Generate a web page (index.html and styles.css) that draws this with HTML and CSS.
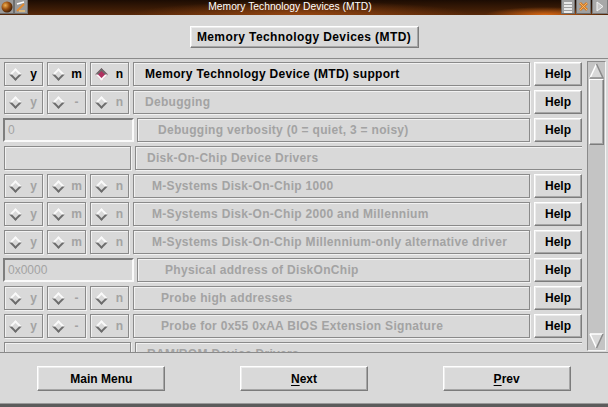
FILE: index.html
```html
<!DOCTYPE html>
<html>
<head>
    <title>Memory Technology Devices (MTD)</title>
    <link rel="stylesheet" href="styles.css">
</head>
<body>
    <div class="window">
        <!-- Title bar -->
        <div class="titlebar">
            <div class="tb-btn">
                <svg width="14" height="15" viewBox="0 0 14 15">
                    <defs>
                        <radialGradient id="ball" cx="0.35" cy="0.35" r="0.7">
                            <stop offset="0" stop-color="#f0b050"/>
                            <stop offset="0.5" stop-color="#9a5010"/>
                            <stop offset="1" stop-color="#3a1a04"/>
                        </radialGradient>
                    </defs>
                    <rect x="0" y="0" width="14" height="14" fill="#6e6e6e"/>
                    <rect x="0" y="0" width="13" height="13" fill="#9a9a9a"/>
                    <circle cx="7" cy="7" r="5.5" fill="url(#ball)"/>
                </svg>
            </div>
            <div class="tb-btn">
                <svg width="14" height="15" viewBox="0 0 14 15">
                    <rect x="0" y="0" width="14" height="14" fill="#6e6e6e"/>
                    <rect x="1" y="0" width="12" height="13" fill="#9a9a9a"/>
                    <path d="M3 4 L10 2" stroke="#fff" stroke-width="1.5"/>
                    <path d="M10 4 L3 11" stroke="#e08a30" stroke-width="2"/>
                    <path d="M5 11 L11 11" stroke="#f0c070" stroke-width="1.5"/>
                </svg>
            </div>
            <div class="tb-title">Memory Technology Devices (MTD)</div>
            <div class="tb-btn tb-wide">
                <svg width="16" height="15" viewBox="0 0 16 15">
                    <rect x="1" y="0" width="14" height="14" fill="#6e6e6e"/>
                    <rect x="2" y="0" width="12" height="13" fill="#a0a0a0"/>
                    <path d="M4 3 H12 M4 6 H12 M4 9 H12 M4 12 H12" stroke="#fff" stroke-width="1.3"/>
                </svg>
            </div>
            <div class="tb-btn tb-wide">
                <svg width="16" height="15" viewBox="0 0 16 15">
                    <rect x="0" y="0" width="15" height="14" fill="#6e6e6e"/>
                    <rect x="1" y="0" width="13" height="13" fill="#a0a0a0"/>
                    <path d="M4 3 L11 10 M11 3 L4 10" stroke="#d87a20" stroke-width="2.6"/>
                    <path d="M4 3 L11 10 M11 3 L4 10" stroke="#f6c27a" stroke-width="0.8"/>
                </svg>
            </div>
            <div class="tb-btn tb-wide">
                <svg width="16" height="15" viewBox="0 0 16 15">
                    <rect x="0" y="0" width="16" height="14" fill="#7a7a7a"/>
                    <rect x="1" y="0" width="14" height="13" fill="#a8a8a8"/>
                    <path d="M5 2 L11 6.5 L5 11 Z" fill="#c8c8c8" stroke="#f4f4f4" stroke-width="1"/>
                </svg>
            </div>
        </div>

        <!-- Menu title button -->
        <div class="header">
            <button class="btn title-btn">Memory Technology Devices (MTD)</button>
        </div>

        <!-- Option list -->
        <div class="list-frame">
            <div class="rows">
                <div class="row">
                    <div class="groove tri"><i class="dia"></i><span>y</span></div>
                    <div class="groove tri"><i class="dia"></i><span>m</span></div>
                    <div class="groove tri"><i class="dia on"></i><span>n</span></div>
                    <div class="groove label">Memory Technology Device (MTD) support</div>
                    <button class="btn help">Help</button>
                </div>
                <div class="row off">
                    <div class="groove tri"><i class="dia"></i><span>y</span></div>
                    <div class="groove tri"><i class="dia"></i><span>-</span></div>
                    <div class="groove tri"><i class="dia"></i><span>n</span></div>
                    <div class="groove label">Debugging</div>
                    <button class="btn help">Help</button>
                </div>
                <div class="row off">
                    <div class="entry">0</div>
                    <div class="groove label wide-gap indent-2">Debugging verbosity (0 = quiet, 3 = noisy)</div>
                    <button class="btn help">Help</button>
                </div>
                <div class="row off">
                    <div class="groove blank"></div>
                    <div class="groove label comment">Disk-On-Chip Device Drivers</div>
                </div>
                <div class="row off">
                    <div class="groove tri"><i class="dia"></i><span>y</span></div>
                    <div class="groove tri"><i class="dia"></i><span>m</span></div>
                    <div class="groove tri"><i class="dia"></i><span>n</span></div>
                    <div class="groove label indent-1">M-Systems Disk-On-Chip 1000</div>
                    <button class="btn help">Help</button>
                </div>
                <div class="row off">
                    <div class="groove tri"><i class="dia"></i><span>y</span></div>
                    <div class="groove tri"><i class="dia"></i><span>m</span></div>
                    <div class="groove tri"><i class="dia"></i><span>n</span></div>
                    <div class="groove label indent-1">M-Systems Disk-On-Chip 2000 and Millennium</div>
                    <button class="btn help">Help</button>
                </div>
                <div class="row off">
                    <div class="groove tri"><i class="dia"></i><span>y</span></div>
                    <div class="groove tri"><i class="dia"></i><span>m</span></div>
                    <div class="groove tri"><i class="dia"></i><span>n</span></div>
                    <div class="groove label indent-1">M-Systems Disk-On-Chip Millennium-only alternative driver</div>
                    <button class="btn help">Help</button>
                </div>
                <div class="row off">
                    <div class="entry">0x0000</div>
                    <div class="groove label wide-gap indent-3">Physical address of DiskOnChip</div>
                    <button class="btn help">Help</button>
                </div>
                <div class="row off">
                    <div class="groove tri"><i class="dia"></i><span>y</span></div>
                    <div class="groove tri"><i class="dia"></i><span>-</span></div>
                    <div class="groove tri"><i class="dia"></i><span>n</span></div>
                    <div class="groove label indent-3">Probe high addresses</div>
                    <button class="btn help">Help</button>
                </div>
                <div class="row off">
                    <div class="groove tri"><i class="dia"></i><span>y</span></div>
                    <div class="groove tri"><i class="dia"></i><span>-</span></div>
                    <div class="groove tri"><i class="dia"></i><span>n</span></div>
                    <div class="groove label indent-3">Probe for 0x55 0xAA BIOS Extension Signature</div>
                    <button class="btn help">Help</button>
                </div>
                <div class="row off">
                    <div class="groove blank"></div>
                    <div class="groove label comment">RAM/ROM Device Drivers</div>
                </div>
            </div>

            <!-- Scrollbar -->
            <div class="scrollbar">
                <div class="arrow">
                    <svg width="15" height="16" viewBox="0 0 15 16">
                        <path d="M7.5 1 L14 15 L1 15 Z" fill="#d9d9d9"/>
                        <path d="M1 15 L7.5 1" stroke="#fff" stroke-width="1.5"/>
                        <path d="M7.5 1 L14 15 L1 15" fill="none" stroke="#8a8a8a" stroke-width="1.5"/>
                    </svg>
                </div>
                <div class="thumb"></div>
                <div class="trough"></div>
                <div class="arrow">
                    <svg width="15" height="16" viewBox="0 0 15 16">
                        <path d="M1 1 L14 1 L7.5 15 Z" fill="#d9d9d9"/>
                        <path d="M1 1 L14 1 M1 1 L7.5 15" stroke="#fff" stroke-width="1.5" fill="none"/>
                        <path d="M14 1 L7.5 15" stroke="#8a8a8a" stroke-width="1.5"/>
                    </svg>
                </div>
            </div>
        </div>

        <!-- Navigation -->
        <div class="footer">
            <button class="btn nav">Main Menu</button>
            <button class="btn nav"><u>N</u>ext</button>
            <button class="btn nav"><u>P</u>rev</button>
        </div>
        <div class="bottom-edge"></div>
    </div>
</body>
</html>
```

FILE: styles.css
```css
* {
    box-sizing: border-box;
}

body {
    margin: 0;
    width: 608px;
    height: 407px;
    overflow: hidden;
    background: #d9d9d9;
    font-family: 'Liberation Sans', Arial, sans-serif;
    font-size: 12px;
    font-weight: bold;
    color: #000;
}

.window {
    height: 407px;
    display: flex;
    flex-direction: column;
}

/* Title bar */
.titlebar {
    height: 15px;
    flex: none;
    display: flex;
    background:
        radial-gradient(ellipse 170px 14px at 300px 15px, rgba(170, 80, 20, 0.75), transparent),
        radial-gradient(ellipse 60px 8px at 545px 15px, rgba(230, 110, 20, 0.9), transparent),
        linear-gradient(#1c0c03, #3c1c06 60%, #58290a);
}
.tb-btn {
    width: 14px;
    height: 15px;
    flex: none;
    line-height: 0;
}
.tb-wide {
    width: 16px;
}
.tb-btn svg {
    display: block;
}
.tb-title {
    flex: 1;
    text-align: center;
    color: #fff;
    font-weight: normal;
    font-size: 10.3px;
    line-height: 14px;
    padding-right: 8px;
}

/* Bevelled widgets */
.btn {
    font: inherit;
    color: #000;
    background: #d9d9d9;
    border: 1px solid;
    border-color: #fff #7c7c7c #7c7c7c #fff;
    box-shadow: inset -1px -1px 0 #a6a6a6, inset 1px 1px 0 #ececec;
    padding: 0;
    margin: 0;
}
.groove {
    border: 1px solid #8a8a8a;
    box-shadow: inset 1px 1px 0 #f2f2f2, 1px 1px 0 #f2f2f2;
}

.header {
    height: 43px;
    flex: none;
    display: flex;
    justify-content: center;
    padding-top: 11px;
}
.title-btn {
    width: 229px;
    height: 22px;
    font-size: 12px;
    letter-spacing: 0.4px;
}

/* List */
.list-frame {
    height: 295px;
    flex: none;
    display: flex;
    border-top: 1px solid #8a8a8a;
    border-bottom: 1px solid #8a8a8a;
}
.rows {
    width: 582px;
    flex: none;
    padding: 3px 0 0 4px;
    display: flex;
    flex-direction: column;
    gap: 4px;
    overflow: hidden;
}
.row {
    height: 24px;
    flex: none;
    display: flex;
    gap: 4px;
}
.row.off {
    color: #a3a3a3;
}

.tri {
    width: 39px;
    flex: none;
    display: flex;
    align-items: center;
    padding-left: 6px;
}
.tri span {
    flex: 1;
    text-align: center;
    margin-left: 5px;
}
.dia {
    display: block;
    width: 9px;
    height: 9px;
    flex: none;
    transform: rotate(45deg);
    border: 2px solid;
    border-color: #fafafa #6c6c6c #6c6c6c #fafafa;
}
.dia.on {
    background: #b03060;
    border-color: #6c6c6c #fafafa #fafafa #6c6c6c;
}

.label {
    flex: 1;
    display: flex;
    align-items: center;
    padding-left: 11px;
    letter-spacing: 0.3px;
    white-space: nowrap;
    overflow: hidden;
}
.label.wide-gap {
    margin-left: -1px;
}
.label.comment {
    margin-right: -1px;
    padding-left: 11px;
}
.indent-1 {
    padding-left: 18px;
}
.indent-2 {
    padding-left: 20px;
}
.indent-3 {
    padding-left: 27px;
}

.help {
    width: 48px;
    flex: none;
}

.entry {
    width: 131px;
    flex: none;
    margin-left: -1px;
    border: 2px solid;
    border-color: #7e7e7e #fafafa #fafafa #7e7e7e;
    font-weight: normal;
    font-size: 12px;
    line-height: 20px;
    padding-left: 3px;
}
.blank {
    width: 127px;
    flex: none;
}

/* Scrollbar */
.scrollbar {
    width: 19px;
    height: 290px;
    flex: none;
    margin: 2px 0 0 5px;
    display: flex;
    flex-direction: column;
    padding: 1px;
    border: 1px solid;
    border-color: #8a8a8a #f4f4f4 #f4f4f4 #8a8a8a;
    background: #c4c4c4;
}
.arrow {
    height: 16px;
    flex: none;
    line-height: 0;
}
.thumb {
    height: 66px;
    flex: none;
    background: #d9d9d9;
    border: 1px solid;
    border-color: #fff #7c7c7c #7c7c7c #fff;
    box-shadow: inset -1px -1px 0 #a6a6a6;
}
.trough {
    flex: 1;
}

/* Navigation */
.footer {
    height: 50px;
    flex: none;
    display: flex;
    justify-content: space-around;
    align-items: flex-start;
    padding-top: 13px;
}
.nav {
    width: 128px;
    height: 25px;
}
.nav u {
    text-decoration-thickness: 1px;
    text-underline-offset: 2px;
}

.bottom-edge {
    height: 4px;
    flex: none;
    background: #5c5c5c;
    border-top: 1px solid #9a9a9a;
}
```
